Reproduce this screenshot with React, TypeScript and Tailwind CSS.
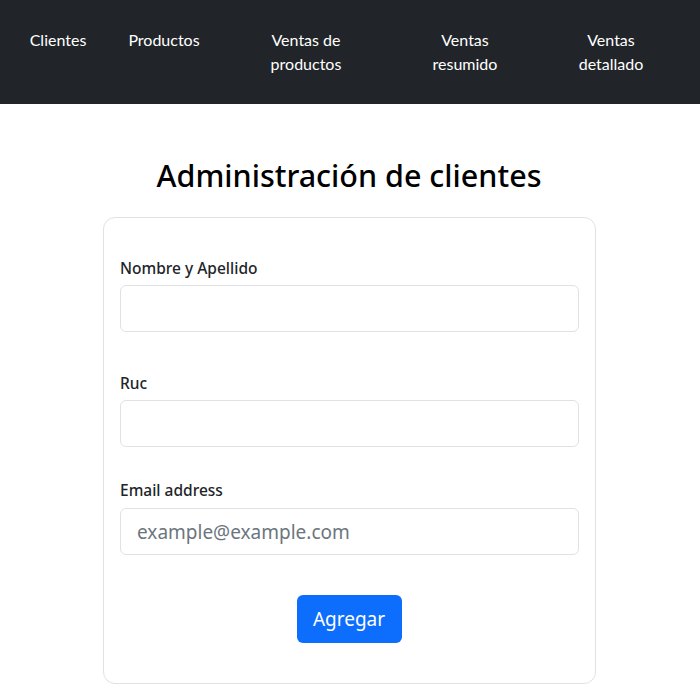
export default function App() {
  const body = { fontFamily: '"Noto Sans", "Open Sans", sans-serif' };
  return (
    <div className="min-h-[700px] bg-white" style={body}>
      <nav className="h-[104px] bg-[#212529] flex items-start pt-[28px] text-white text-[16px] leading-[24px]" style={{ fontFamily: 'Lato, sans-serif' }}>
        <div className="w-[116px] text-center">Clientes</div>
        <div className="w-[96px] text-center">Productos</div>
        <div className="w-[188px] text-center">Ventas de<br />productos</div>
        <div className="w-[130px] text-center">Ventas<br />resumido</div>
        <div className="w-[162px] text-center">Ventas<br />detallado</div>
      </nav>
      <h1 className="mt-[51px] text-center text-[30.5px] leading-[40px] font-medium text-black pr-[2px]">Administración de clientes</h1>
      <div className="ml-[103px] mt-[22px] w-[493px] border border-[#dee2e6] rounded-[12px] px-[16px] pt-[38px] pb-[40px]">
        <label className="block text-[15.5px] leading-[24px] font-medium text-[#212529]">Nombre y Apellido</label>
        <input className="mt-[5px] block w-full h-[47px] border border-[#dee2e6] rounded-[6px] px-[16px] text-[19px] outline-none" />
        <label className="block mt-[39px] text-[15.5px] leading-[24px] font-medium text-[#212529]">Ruc</label>
        <input className="mt-[5px] block w-full h-[47px] border border-[#dee2e6] rounded-[6px] px-[16px] text-[19px] outline-none" />
        <label className="block mt-[31px] text-[15.5px] leading-[24px] font-medium text-[#212529]">Email address</label>
        <input placeholder="example@example.com" className="mt-[6px] block w-full h-[47px] border border-[#dee2e6] rounded-[6px] px-[16px] text-[19px] outline-none placeholder:text-[#6c757d]" />
        <div className="mt-[40px] flex justify-center pr-[1px]">
          <button className="h-[48px] w-[105px] bg-[#0d6efd] text-white text-[19px] rounded-[6px]">Agregar</button>
        </div>
      </div>
    </div>
  );
}
